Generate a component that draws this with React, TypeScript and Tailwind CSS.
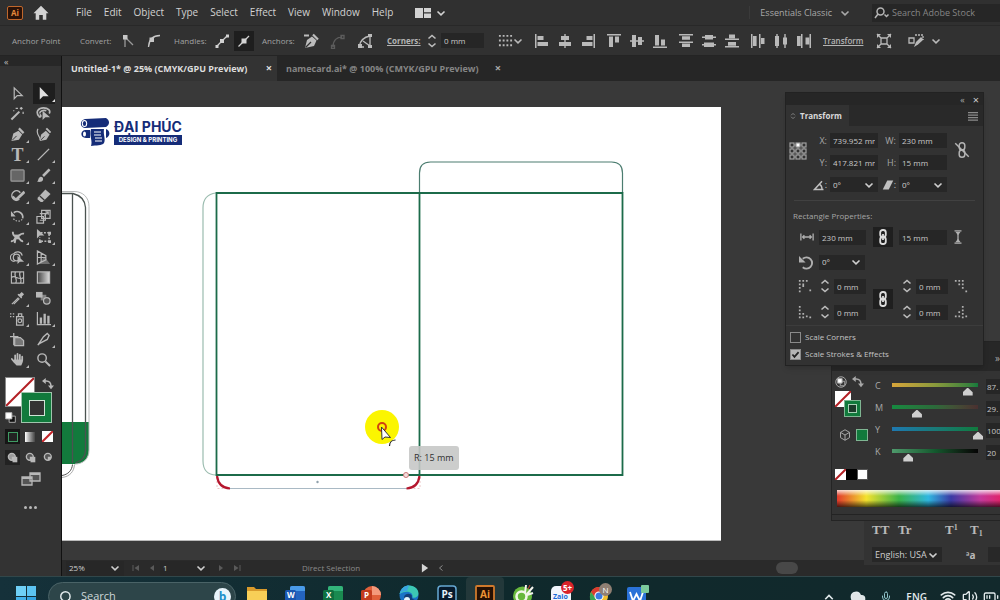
import React, { ReactNode, useState } from "react";
import { Cloud, Mic, Volume2, Wifi, BatteryMedium, Search } from "lucide-react";

const UI = "font-['Open_Sans','Noto_Sans',sans-serif]";

/* ---------- shared pieces ---------- */

function Icon({ children, className = "size-4", box = 16 }: { children: ReactNode; className?: string; box?: number }) {
  return (
    <svg viewBox={`0 0 ${box} ${box}`} className={`block shrink-0 ${className}`} fill="none" stroke="currentColor" strokeWidth="1.3" aria-hidden="true">
      {children}
    </svg>
  );
}

function Chevron({ className = "" }: { className?: string }) {
  return (
    <svg viewBox="0 0 10 10" className={`size-[10px] shrink-0 ${className}`} fill="none" stroke="currentColor" strokeWidth="1.6" aria-hidden="true">
      <path d="M1.5 3.5 5 6.8 8.5 3.5" />
    </svg>
  );
}

function IconButton({ label, className = "", children }: { label: string; className?: string; children: ReactNode }) {
  return (
    <button type="button" aria-label={label} className={`flex h-5 w-5 shrink-0 items-center justify-center ${className}`}>
      {children}
    </button>
  );
}

function Field({ label, value, className = "" }: { label: string; value: string; className?: string }) {
  const [v, setV] = useState(value);
  return (
    <input
      type="text"
      aria-label={label}
      value={v}
      onChange={(e) => setV(e.target.value)}
      className={`h-[15px] min-w-0 shrink-0 bg-[#262626] px-[3px] text-[8px] leading-3 font-medium text-[#c8c8c8] outline-none ${className}`}
    />
  );
}

function Drop({ label, options, className = "" }: { label: string; options: string[]; className?: string }) {
  return (
    <span className={`relative flex h-[15px] shrink-0 items-center bg-[#272727] text-[#cfcfcf] ${className}`}>
      <select aria-label={label} className="h-full w-full appearance-none bg-transparent pl-[3px] text-[8px] leading-3 font-medium outline-none">
        {options.map((o) => (
          <option key={o}>{o}</option>
        ))}
      </select>
      <Chevron className="pointer-events-none absolute right-[4px]" />
    </span>
  );
}

function Stepper({ label }: { label: string }) {
  return (
    <button type="button" aria-label={label} className="flex h-4 w-[18px] shrink-0 items-center justify-center text-[#bdbdbd]">
      <Icon className="size-4">
        <path d="M4.5 5.5 8 2.5l3.500 3M4.500 10.500 8 13.500l3.500-3" strokeWidth="1.600" />
      </Icon>
    </button>
  );
}

/* ---------- menu bar ---------- */

const MENUS = ["File", "Edit", "Object", "Type", "Select", "Effect", "View", "Window", "Help"];

function MenuBar() {
  return (
    <header className="flex h-[26px] shrink-0 items-center border-b border-[#282828] bg-[#303030] text-[#d2d2d2]">
      <span className="ml-[7px] flex h-[14px] w-4 items-center justify-center rounded-[2px] border border-[#c0672c] bg-[#2a1208] text-[8px] font-bold text-[#e58a3c]">
        Ai
      </span>
      <button type="button" aria-label="Home" className="ml-[10px]">
        <Icon className="size-4">
          <path d="M8 .8 15.500 8.300H13.300V14.800H9.800V10H6.200V14.800H2.700V8.300H.5Z" fill="currentColor" stroke="none" />
        </Icon>
      </button>
      <nav className="ml-[27px] flex gap-3 text-[10px] font-medium">
        {MENUS.map((m) => (
          <button type="button" key={m}>
            {m}
          </button>
        ))}
      </nav>
      <button type="button" aria-label="Arrange documents" className="ml-[22px] flex items-center gap-[5px]">
        <svg viewBox="0 0 16 12" className="h-3 w-4" fill="currentColor" aria-hidden="true">
          <path d="M0 1h8v10H0zM9 1h7v4.300H9zM9 6.500h7V11H9z" />
        </svg>
        <Chevron />
      </button>
      <button type="button" className="ml-auto flex items-center gap-2 border-l border-[#3a3a3a] pl-[10px] text-[9px] font-medium text-[#a9a9a9]">
        Essentials Classic
        <Chevron />
      </button>
      <label className="ml-[22px] flex h-[18px] w-[128px] items-center gap-[2px] bg-[#262626] pl-[2px] text-[#b5b5b5]">
        <svg viewBox="0 0 16 12" className="h-3 w-4 shrink-0" fill="none" stroke="currentColor" strokeWidth="1.500" aria-hidden="true">
          <circle cx="6.500" cy="4.500" r="3.500" />
          <path d="M4 7 1 11M10.500 7.500l2 2 2-2" />
        </svg>
        <input type="search" aria-label="Search Adobe Stock" placeholder="Search Adobe Stock" className="w-full bg-transparent text-[9px] outline-none placeholder:text-[#858585]" />
      </label>
    </header>
  );
}

/* ---------- control bar ---------- */

const f = { fill: "currentColor", stroke: "none" };

const ALIGN: { label: string; art: ReactNode }[][] = [
  [
    { label: "Align left", art: <path {...f} d="M1 1h1.500v14H1zM3.500 3h6v4h-6zM3.500 9h10.500v4H3.500z" /> },
    { label: "Align centre", art: <path {...f} d="M7.300 1h1.400v14H7.300zM4 3h8v4H4zM2 9h12v4H2z" /> },
    { label: "Align right", art: <path {...f} d="M13.500 1H15v14h-1.500zM6.500 3h6v4h-6zM2 9h10.500v4H2z" /> },
  ],
  [
    { label: "Align top", art: <path {...f} d="M1 1h14v1.500H1zM3 3.500h4V14H3zM9 3.500h4v6H9z" /> },
    { label: "Align middle", art: <path {...f} d="M1 7.300h14v1.400H1zM3 2h4v12H3zM9 4h4v8H9z" /> },
    { label: "Align bottom", art: <path {...f} d="M1 13.500h14V15H1zM3 2h4v10.500H3zM9 6.500h4v6H9z" /> },
  ],
  [
    { label: "Distribute top", art: <path {...f} d="M1 1h14v1.500H1zM4 3.300h8v3.400H4zM1 8.500h14V10H1zM4 10.500h8V14H4z" /> },
    { label: "Distribute vertically", art: <path {...f} d="M1 3.500h14V5H1zM4 2h8v4.500H4zM1 11h14v1.500H1zM3 9.500h10V14H3z" /> },
    { label: "Distribute bottom", art: <path {...f} d="M1 5.500h14V7H1zM5 1.500h6v3.700H5zM1 13h14v1.500H1zM4 9h8v3.700H4z" /> },
  ],
  [
    { label: "Distribute left", art: <path {...f} d="M1 1h1.500v14H1zM3 3h3.600v10H3zM9 1h1.500v14H9zM11 5h3.500v6H11z" /> },
    { label: "Distribute horizontally", art: <path {...f} d="M3.300 1h1.400v14H3.300zM2 3h4v10H2zM11.300 1h1.400v14h-1.400zM10 4.500h4v7h-4z" /> },
    { label: "Distribute right", art: <path {...f} d="M1 3h3.700v10H1zM5 1h1.500v14H5zM9.500 4.500h3.700v7H9.500zM13.500 1H15v14h-1.500z" /> },
  ],
];

function ControlBar() {
  return (
    <div className="flex h-[30px] shrink-0 items-center overflow-hidden border-b border-[#242424] bg-[#313131] pl-3 text-[8px] text-[#a2a2a2]">
      <span className="w-[68px] shrink-0">Anchor Point</span>
      <span className="w-[38px] shrink-0">Convert:</span>
      <div className="flex shrink-0 gap-[6px] text-[#c6c6c6]">
        <IconButton label="Convert to corner">
          <Icon>
            <path d="M5 14V4l8 8" opacity=".7" />
            <path d="M3 2h4.500v4.500H3z" {...f} />
          </Icon>
        </IconButton>
        <IconButton label="Convert to smooth">
          <Icon>
            <path d="M2.500 14C3 7 7 2.500 14 2.500" />
            <path d="M3.500 4.500H8V9H3.500z" {...f} />
          </Icon>
        </IconButton>
      </div>
      <span className="ml-[10px] w-[38px] shrink-0">Handles:</span>
      <div className="flex shrink-0 gap-[2px] text-[#d2d2d2]">
        <IconButton label="Show handles">
          <Icon>
            <path d="M3 13 13 3" />
            <path d="M6 6h4v4H6zM1.500 12h3v3h-3zM12 1.500h3v3h-3z" {...f} />
          </Icon>
        </IconButton>
        <IconButton label="Hide handles" className="bg-[#1e1e1e]">
          <Icon>
            <path d="M2.500 13.500 13 3" />
            <path d="M5.500 5.500h5v5h-5z" {...f} />
          </Icon>
        </IconButton>
      </div>
      <span className="ml-2 w-[39px] shrink-0">Anchors:</span>
      <div className="flex shrink-0 gap-[7px] text-[#bcbcbc]">
        <IconButton label="Remove anchor">
          <Icon>
            <path d="M2 15 4 7l5-3.500 4.500 4L11 13Z" {...f} />
            <path d="M2.500 14.500 8 9" stroke="#313131" />
            <path d="m10 1.500 5 5M1 2.500h5" strokeWidth="2.200" />
          </Icon>
        </IconButton>
        <IconButton label="Connect endpoints" className="text-[#5c5c5c]">
          <Icon>
            <path d="M3 14C3 7 7 4 12 4M1.500 12.500h3v3h-3zM11 2.500h3v3h-3z" />
          </Icon>
        </IconButton>
        <IconButton label="Cut path">
          <Icon>
            <path d="M2 14C3 8 7 4 13 3M13 3v10M6 8l7 5M2 14h5" />
            <path d="M11 1h4v3h-4zM11 12h4v3h-4zM1 11h4v4H1z" {...f} />
          </Icon>
        </IconButton>
      </div>
      <button type="button" className="ml-3 w-9 shrink-0 text-left font-bold text-[#b4b4b4] underline">
        Corners:
      </button>
      <Stepper label="Corner radius step" />
      <Field label="Corner radius" value="0 mm" className="w-[43px]" />
      <button type="button" aria-label="Reference grid" className="ml-[14px] flex w-6 shrink-0 items-center text-[#b9b9b9]">
        <Icon className="size-[15px]">
          <path d="M1 3h14M1 8h14M1 13h14" strokeWidth="2" strokeDasharray="2 2" />
        </Icon>
        <Chevron />
      </button>
      <div className="ml-[10px] flex shrink-0 gap-[6px] text-[#b9b9b9]">
        {ALIGN.map((group, i) => (
          <div key={i} className="flex gap-[3px]">
            {group.map((a) => (
              <IconButton key={a.label} label={a.label}>
                <Icon>{a.art}</Icon>
              </IconButton>
            ))}
          </div>
        ))}
      </div>
      <button type="button" className="ml-[9px] w-10 shrink-0 text-left font-semibold text-[#b4b4b4] underline">
        Transform
      </button>
      <IconButton label="Isolate" className="ml-[11px] text-[#b9b9b9]">
        <Icon>
          <path d="M5 5h6v6H5zM1 1l4 4M15 1l-4 4M1 15l4-4M15 15l-4-4" />
          <path d="M1 1h4L1 5zM15 1h-4l4 4zM1 15h4l-4-4zM15 15h-4l4-4z" {...f} />
        </Icon>
      </IconButton>
      <button type="button" aria-label="Select similar" className="ml-[14px] flex shrink-0 items-center gap-[7px] text-[#b9b9b9]">
        <Icon>
          <path d="M1 5h5v5H1z" />
          <path d="M7 2h8v5" strokeDasharray="2 1" />
          <path d="m6 14 2-5 5-5 2.500 2.500-5.500 5z" {...f} />
        </Icon>
        <Chevron />
      </button>
    </div>
  );
}

/* ---------- toolbox ---------- */

const TOOLS: { label: string; art: ReactNode; more?: boolean }[] = [
  { label: "Selection", art: <path d="M4.500 2v11.500l3.200-3.200H13Z" /> },
  { label: "Direct selection", more: true, art: <path {...f} d="M4 1v13.500l3.500-3.700H13.500Z" /> },
  {
    label: "Magic wand",
    art: (
      <>
        <path d="M1.500 14.500 10 6" strokeWidth="2.200" />
        <path d="M12 1v3M10.500 2.500h3M14 6v2.500M6 2.500h2.500M4 4.500v1" />
      </>
    ),
  },
  {
    label: "Lasso",
    art: (
      <>
        <path d="M3 11C-1 6 3 2 8 2s8 3 6 6M4 8c0-3 4-4 7-3M3 11c2 2 3-1 1-2" strokeWidth="1.800" />
        <path {...f} d="M7 5v10l3-3h5z" />
      </>
    ),
  },
  {
    label: "Pen",
    more: true,
    art: (
      <>
        <path {...f} d="M1.500 15 3.500 7 9 4l4 4-3.500 5.500Z" />
        <path d="M2.500 14 7 9.500" stroke="#333" strokeWidth="1" />
        <path d="m9.500 1.500 5 5" strokeWidth="2.400" />
      </>
    ),
  },
  {
    label: "Curvature",
    art: (
      <>
        <path {...f} d="M4 15 5.500 8l5-4 4 4-3.500 5.500Z" />
        <path d="m5 14 4-4" stroke="#333" strokeWidth="1" />
        <path d="m11 1.500 4.500 4.500" strokeWidth="2" />
        <path d="M4 14C6 11-1 8 2 2" />
      </>
    ),
  },
  { label: "Type", more: true, art: null },
  { label: "Line segment", more: true, art: <path d="M2 14 14 2" strokeWidth="1.500" /> },
  { label: "Rectangle", more: true, art: <rect x="1" y="2" width="14" height="12" rx="1" fill="#666" stroke="#999" /> },
  {
    label: "Paintbrush",
    more: true,
    art: (
      <>
        <path d="m7.500 8.500 7-7" strokeWidth="2.800" />
        <path {...f} d="M1 14.500c2-1 1-4 3.500-5 2-.5 3.500 1 3 3C7 14.500 4 15.500 1 14.500Z" />
      </>
    ),
  },
  {
    label: "Shaper",
    more: true,
    art: (
      <>
        <path d="M11 5a5 5 0 1 0-1 7" strokeWidth="1.600" />
        <path d="M6 13 15.500 4" strokeWidth="3" />
        <path d="m3 9 4 4" strokeWidth="2" />
      </>
    ),
  },
  {
    label: "Eraser",
    more: true,
    art: (
      <>
        <path {...f} d="M2 10 10 1.500 15.500 6.500 7 15H5L1.500 12Z" />
        <path d="m4 8.500 5 4.500" stroke="#333" />
      </>
    ),
  },
  {
    label: "Rotate",
    more: true,
    art: (
      <>
        <path d="M4 4a6 6 0 0 1 9.500 6" strokeWidth="1.800" />
        <path d="M13 11a6 6 0 0 1-10-2" strokeDasharray="1.500 1.500" />
        <path {...f} d="M1 2v6h5z" />
      </>
    ),
  },
  { label: "Scale", more: true, art: <path d="M6 1.500h9V10H6zM1 8h7v7H1zM4 5h6v7H4M9 7l4-4M10 3h3v3" /> },
  {
    label: "Width",
    more: true,
    art: (
      <>
        <path d="M3 3c0 3 1 5 4 5 4 0 3-4 8-3" strokeWidth="2" />
        <path d="M1 13c4 1 4-4 6-5M7 9c4-1 3 5 7 4M6 10l-1 5" strokeWidth="2" />
        <path {...f} d="M5 6h5v5H5z" />
      </>
    ),
  },
  {
    label: "Free transform",
    more: true,
    art: (
      <>
        <path d="M5 4h9v9H4V9" strokeDasharray="2 1.500" strokeWidth="1.600" />
        <path {...f} d="M1 0v10l3-3h5zM13 3h3v3h-3zM13 12h3v3h-3zM3 12h3v3H3z" />
      </>
    ),
  },
  {
    label: "Shape builder",
    more: true,
    art: (
      <>
        <path d="M5 12a4 4 0 0 1-1-8c2-3 8-3 9 2" />
        <circle cx="7" cy="8" r="3.500" />
        <path {...f} d="M8 6v9l2.500-2.500H15z" />
      </>
    ),
  },
  {
    label: "Perspective grid",
    more: true,
    art: (
      <>
        <path d="M1.500 1v14l9-4.500V6ZM1.500 8h9M5.500 3.500V13" />
        <path {...f} opacity=".45" d="m9 7 6 8H3z" />
      </>
    ),
  },
  { label: "Mesh", art: <path d="M1.500 2h13v12h-13zM1.500 8c4-4 7 4 13 0M6 2c-3 4 3 8 0 12M11 2c-3 4 3 8 0 12" strokeWidth="1.200" /> },
  {
    label: "Gradient",
    art: (
      <>
        <defs>
          <linearGradient id="toolGrad">
            <stop stopColor="#444" />
            <stop offset="1" stopColor="#ddd" />
          </linearGradient>
        </defs>
        <rect x="1.500" y="2" width="13" height="12" fill="url(#toolGrad)" />
      </>
    ),
  },
  {
    label: "Eyedropper",
    more: true,
    art: (
      <>
        <path d="M2 14 9 7M4 14l6-6" strokeWidth="1.200" />
        <path {...f} d="m8 4 4 4 1-1-.5-1L15 3.500 12.500 1 10 3.500 9 3z" />
      </>
    ),
  },
  {
    label: "Blend",
    art: (
      <>
        <path {...f} d="M0 1h7v6H0z" />
        <path {...f} opacity=".6" d="M5 4h6v6H5z" />
        <circle cx="11.500" cy="10.500" r="3.500" fill="#555" />
      </>
    ),
  },
  {
    label: "Symbol sprayer",
    more: true,
    art: (
      <>
        <path d="M7 6h7v9H7zM9 6V3h3.500v3" />
        <circle cx="10.500" cy="10.500" r="2" />
        <path d="M0 3h6M0 6h5" strokeDasharray="1.500 1.500" />
      </>
    ),
  },
  {
    label: "Column graph",
    more: true,
    art: (
      <>
        <path d="M1.500 1v13.500H16" />
        <path {...f} d="M4 7h2.500v6.500H4zM8 3h2.500v10.500H8zM12 5h2.500v8.500H12z" />
      </>
    ),
  },
  {
    label: "Artboard",
    art: (
      <>
        <path d="M4 1v13M0 5h9" />
        <path d="M5 6h6l3.500 3v5.500H5z" fill="#777" />
      </>
    ),
  },
  { label: "Slice", more: true, art: <path d="m2 14 6-9 4-3.500 2 2-2 4.500-8 4Z" strokeWidth="1.500" /> },
  {
    label: "Hand",
    more: true,
    art: (
      <>
        <path d="M5.500 9V3.500M8 8V2M10.500 8V3M13 9V5M5 11 2 7.500" strokeWidth="1.900" strokeLinecap="round" />
        <path {...f} d="M4.500 8h9.400c0 3-.8 4-1.900 6.500H7C5.500 12.500 4.500 11.500 4 10Z" />
      </>
    ),
  },
  {
    label: "Zoom",
    art: (
      <>
        <circle cx="6.500" cy="6.500" r="4.500" strokeWidth="1.500" />
        <path d="m10 10 5 5" strokeWidth="2.200" />
      </>
    ),
  },
];

function Toolbox() {
  return (
    <aside className="flex w-[62px] shrink-0 flex-col border-r border-[#111] bg-[#333] text-[#b8b8b8]">
      <button type="button" aria-label="Collapse tools" className="flex h-[10px] items-center bg-[#272727] pl-1 text-[9px] leading-none">
        «
      </button>
      <div className="mt-[17px] grid h-[287px] w-[52px] grid-cols-2 grid-rows-14 self-center">
        {TOOLS.map((t, i) => (
          <button
            type="button"
            key={t.label}
            aria-label={t.label}
            className={i === 1 ? "relative mx-[2px] flex items-center justify-center bg-[#1e1e1e] text-[#e0e0e0]" : "relative mx-[2px] flex items-center justify-center"}
          >
            {t.art ? <Icon className="size-[15px]">{t.art}</Icon> : <span className="font-['Liberation_Serif',serif] text-[18px] leading-4 font-bold">T</span>}
            {t.more && (
              <svg viewBox="0 0 3 3" className="absolute right-0 bottom-[2px] size-[3px]" fill="currentColor" aria-hidden="true">
                <path d="M3 0v3H0z" />
              </svg>
            )}
          </button>
        ))}
      </div>
      <div className="relative mt-[6px] h-[50px]">
        <button type="button" aria-label="Fill: none" className="absolute top-[1px] left-[5px] size-[30px] border border-[#888] bg-white">
          <svg viewBox="0 0 28 28" className="size-7" aria-hidden="true">
            <path d="M0 28 28 0" stroke="#b32025" strokeWidth="2" />
          </svg>
        </button>
        <button type="button" aria-label="Stroke: green" className="absolute top-4 left-[21px] flex size-[31px] items-center justify-center border border-[#a0c5ad] bg-[#117a3c]">
          <span className="size-4 border border-[#cfe3d5] bg-[#333]" />
        </button>
        <button type="button" aria-label="Swap fill and stroke" className="absolute top-[2px] left-[42px]">
          <Icon className="size-3">
            <path d="M4 4c6-1 8 3 8 7" strokeWidth="2" />
            <path {...f} d="M5 0v8L0 4zM8 10h8l-4 5z" />
          </Icon>
        </button>
        <button type="button" aria-label="Default colours" className="absolute top-[36px] left-[5px]">
          <Icon className="size-[11px]">
            <path d="M6 6h9v9H6z" fill="#111" />
            <path d="M1 1h9v9H1z" fill="#fff" />
          </Icon>
        </button>
      </div>
      <div className="mt-[3px] flex gap-[2px] pl-[5px]">
        <IconButton label="Colour" className="!h-[15px] !w-[15px] bg-[#161616]">
          <span className="size-[10px] border border-[#3f9b63] bg-[#222]" />
        </IconButton>
        <IconButton label="Gradient fill" className="!h-[15px] !w-[15px]">
          <span className="size-[10px] bg-linear-to-r from-white to-[#444]" />
        </IconButton>
        <IconButton label="No fill" className="!h-[15px] !w-[17px]">
          <Icon className="size-[11px]">
            <path d="M0 0h16v16H0z" fill="#fff" stroke="none" />
            <path d="M0 16 16 0" stroke="#c4262b" strokeWidth="3" />
          </Icon>
        </IconButton>
      </div>
      <div className="mt-[6px] flex gap-[2px] pl-[5px]">
        {["Draw normal", "Draw behind", "Draw inside"].map((l, i) => (
          <IconButton key={l} label={l} className={i === 0 ? "!h-[15px] !w-[15px] bg-[#222]" : "!h-[15px] !w-[16px]"}>
            <Icon className="size-[11px]">
              {i < 2 ? <path {...f} d="M8 7h7v8H8z" /> : null}
              <circle cx="7" cy="7" r="5" fill={i === 0 ? "#999" : "#555"} strokeWidth="2" />
              <path {...f} d="M7 7h5a5 5 0 0 1-5 5z" />
            </Icon>
          </IconButton>
        ))}
      </div>
      <button type="button" aria-label="Screen mode" className="mt-[7px] flex h-[18px] justify-center">
        <svg viewBox="0 0 20 15" className="h-[15px] w-5" fill="#555" stroke="currentColor" strokeWidth="1.300" aria-hidden="true">
          <path d="M9 1h10v8H9zM1 5h10v8H1z" />
          <path d="M9 2h10M1 6h10" strokeWidth="2" />
        </svg>
      </button>
      <button type="button" aria-label="Edit toolbar" className="mt-3 flex justify-center gap-[2px] py-[4px]">
        <i className="size-[3px] rounded-full bg-current" />
        <i className="size-[3px] rounded-full bg-current" />
        <i className="size-[3px] rounded-full bg-current" />
      </button>
    </aside>
  );
}

/* ---------- document ---------- */

function Tabs() {
  return (
    <div role="tablist" className="flex h-[25px] shrink-0 items-stretch bg-[#262626] text-[9px]">
      <div className="flex w-[215px] items-center justify-between bg-[#333] pr-[5px] pl-[9px] font-bold text-[#dedede]">
        <button type="button" role="tab" aria-selected="true" className="whitespace-nowrap">
          Untitled-1* @ 25% (CMYK/GPU Preview)
        </button>
        <button type="button" aria-label="Close Untitled-1" className="text-[11px]">
          ×
        </button>
      </div>
      <div className="flex w-[230px] items-center justify-between pr-[6px] pl-[9px] font-bold text-[#858585]">
        <button type="button" role="tab" aria-selected="false" className="whitespace-nowrap">
          namecard.ai* @ 100% (CMYK/GPU Preview)
        </button>
        <button type="button" aria-label="Close namecard.ai" className="text-[11px] text-[#aaa]">
          ×
        </button>
      </div>
    </div>
  );
}

function Drawing() {
  return (
    <svg className="absolute inset-0 h-full w-full" fill="none" aria-label="Folder die-line" role="img">
      <g transform="translate(-62 -107)">
        <path d="M62 422h27v28c0 9-6 14-14 14H62z" fill="#127a3c" />
        <path d="M62 191.500h12c9 0 15 6 15 15V450c0 9-6 14-14 14" stroke="#b9bbbb" />
        <path d="M62 193.500h11c8 2 12 7 12.500 14V450c0 7-4 11-10 13" stroke="#4b5350" strokeWidth="1.300" />
        <path d="M72.500 193v270" stroke="#4b5350" strokeWidth="1.300" />
        <path d="M62 475.500c6-1 10-5 10.500-11" stroke="#555" />
        <path d="M62 477.500c8-1 12-6 12.500-13" stroke="#aaa" />

        <path d="M216 193c-9 1-13 6-13 15v253c0 9 5 14 13 14" stroke="#9bbcaf" strokeWidth="1.200" />
        <path d="M419.500 193v-20c0-7 4-11 11-11h181c7 0 11 4 11 11v20" stroke="#4c7d70" strokeWidth="1.200" />
        <path d="M216.500 193h406v282h-406zM419.500 193v282" stroke="#1c6b4a" strokeWidth="1.800" />

        <path d="M228 488.500h180" stroke="#a9b9c4" />
        <path d="M217 477v11.500h12M420 477v11.500h-12" stroke="#e6b7b7" strokeWidth=".8" strokeDasharray="2 2" />
        <path d="M217 476c1 8 5 12 13 12.500M419.500 476c-1 8-5 12-13 12.500" stroke="#b5172e" strokeWidth="2.200" />
        <circle cx="317.500" cy="482" r="1.200" fill="#8fa0ab" />
        <circle cx="406" cy="475" r="2.500" stroke="#c97777" fill="#f3dede" />

        <circle cx="382" cy="427" r="17" fill="#fbf500" />
        <circle cx="382" cy="427" r="4" stroke="#d1420f" strokeWidth="2" />
        <path d="m381.500 427 .5 12.500 3-2.500 5.500.5Z" fill="#fff" stroke="#333" />
        <path d="M389.500 446c0-4 3-6 6-6" stroke="#222" strokeWidth="1.200" />
      </g>
    </svg>
  );
}

function Logo() {
  return (
    <div className="absolute top-[10px] left-[18px] flex items-center gap-1 font-['Inter','Noto_Sans',sans-serif] text-[#152c78]">
      <svg viewBox="0 0 30 30" className="size-[30px]" fill="currentColor" aria-hidden="true">
        <path d="M5 2 26 1c4 2 4 7 0 9L5 11C-1 10 0 3 5 2Z" />
        <ellipse cx="4.500" cy="6.500" rx="2.700" ry="3.600" fill="#fff" />
        <ellipse cx="4.500" cy="6.500" rx="1.600" ry="2.600" />
        <path d="M5 13h5v8H6c-6 0-6-7-1-8ZM26 12c4 1 5 7 0 9z" />
        <ellipse cx="4.500" cy="17" rx="1.500" ry="2.500" fill="#fff" />
        <path d="M11 12h13c-1 6 2 10 0 14-2 3-8 2-13 3 2-5-2-10 0-17Z" />
        <path d="M14 15h7M14 18h7M15 21h7M15 24h7" stroke="#fff" strokeWidth="1.200" />
      </svg>
      <div>
        <p className="text-[14px] leading-[15px] font-bold whitespace-nowrap">ĐẠI PHÚC</p>
        <p className="mt-[1px] bg-[#152c78] px-[2px] text-center text-[6px] leading-[10px] font-bold whitespace-nowrap text-white">DESIGN &amp; PRINTING</p>
      </div>
    </div>
  );
}

function StatusBar() {
  return (
    <footer className="flex h-4 shrink-0 items-center overflow-hidden bg-[#2a2a2a] pl-1 text-[#8b8b8b]">
      <Drop label="Zoom level" options={["25%", "50%", "100%"]} className="w-[58px]" />
      <div className="flex w-[36px] justify-center gap-2 pl-1 text-[#5a5a5a]">
        <Icon className="size-2">
          <path {...f} d="M1 2h2v12H1zM14 2v12L5 8z" />
        </Icon>
        <Icon className="size-2">
          <path {...f} d="M12 2v12L4 8z" />
        </Icon>
      </div>
      <Drop label="Artboard" options={["1"]} className="w-[50px]" />
      <div className="flex w-[38px] justify-center gap-2 text-[#5a5a5a]">
        <Icon className="size-2">
          <path {...f} d="M4 2v12l8-6z" />
        </Icon>
        <Icon className="size-2">
          <path {...f} d="M2 2v12l9-6zM13 2h2v12h-2z" />
        </Icon>
      </div>
      <span className="ml-[54px] w-[118px] text-[8px]">Direct Selection</span>
      <Icon className="size-[10px] text-[#d5d5d5]">
        <path {...f} d="M3 1v14l10-7z" />
      </Icon>
      <Icon className="ml-[7px] size-2">
        <path d="m11 3-6 5 6 5" strokeWidth="2" />
      </Icon>
      <span className="ml-auto h-3 w-[22px] rounded-full bg-[#484848]" />
      <span className="w-[202px] shrink-0" />
    </footer>
  );
}

/* ---------- panels ---------- */

const linkArt = (
  <>
    <rect x="5.200" y="1" width="5.600" height="7" rx="2.500" strokeWidth="1.800" />
    <rect x="5.200" y="8" width="5.600" height="7" rx="2.500" strokeWidth="1.800" />
    <path d="M8 5v6" strokeWidth="1.800" />
  </>
);

const topCorner = (
  <path {...f} d="M1 1h2v2H1zM5 1h2v2H5zM9 1h2v2H9zM1 5h2v2H1zM1 9h2v2H1zM1 13h2v2H1zM5 5h2v4H5zM13 12h2v2h-2z" />
);
const bottomCorner = (
  <path {...f} d="M1 1h2v2H1zM1 5h2v2H1zM1 9h2v2H1zM1 13h2v2H1zM5 9h2v2H5zM5 13h2v2H5zM9 12h2v2H9zM13 13h2v2h-2z" />
);

function TransformPanel() {
  return (
    <section aria-label="Transform" className="absolute top-[36px] right-4 z-20 w-[199px] border border-[#222] bg-[#323232] text-[9px] text-[#a6a6a6] shadow-md">
      <div className="flex h-3 items-center justify-end gap-2 bg-[#262626] pr-1 leading-none">
        <button type="button" aria-label="Collapse">«</button>
        <button type="button" aria-label="Close" className="text-[11px] text-[#ccc]">×</button>
      </div>
      <div className="flex h-[21px] items-center justify-between bg-[#292929] pr-[5px]">
        <h2 className="flex h-full w-[63px] items-center gap-1 bg-[#323232] pl-1 text-[8px] font-bold text-[#dadada]">
          <Icon className="size-[6px] text-[#888]">
            <path d="m3 6 5-5 5 5M3 10l5 5 5-5" strokeWidth="2.500" />
          </Icon>
          Transform
        </h2>
        <button type="button" aria-label="Panel menu">
          <Icon className="size-[10px] text-[#8b8b8b]">
            <path d="M0 2.500h16M0 6.500h16M0 10.500h16M0 14.500h16" strokeWidth="2" />
          </Icon>
        </button>
      </div>

      <div className="flex items-start pt-[7px]">
        <button type="button" aria-label="Reference point" className="mt-[9px] ml-[3px] text-[#a0a0a0]">
          <Icon className="size-[18px]" box={18}>
            <path d="M3 3h12v12H3zM3 9h12M9 3v12" strokeWidth="1" />
            {[3, 9, 15].map((y) => [3, 9, 15].map((x) => <rect key={`${x}-${y}`} x={x - 2} y={y - 2} width="4" height="4" strokeWidth="1.200" fill={x === 9 && y === 3 ? "#fff" : "#323232"} />))}
          </Icon>
        </button>
        <div className="flex flex-col gap-[7px]">
          <div className="flex items-center">
            <span className="w-5 text-right">X:</span>
            <Field label="X" value="739.952 mm" className="ml-[3px] w-[48px]" />
            <span className="w-[18px] text-right">W:</span>
            <Field label="Width" value="230 mm" className="ml-[3px] w-[48px]" />
          </div>
          <div className="flex items-center">
            <span className="w-5 text-right">Y:</span>
            <Field label="Y" value="417.821 mm" className="ml-[3px] w-[48px]" />
            <span className="w-[18px] text-right">H:</span>
            <Field label="Height" value="15 mm" className="ml-[3px] w-[48px]" />
          </div>
          <div className="flex items-center">
            <span className="flex w-5 items-center justify-end text-[#c0c0c0]">
              <Icon className="size-3">
                <path d="M14 14H2L12 3M8 7c3 1 4 4 4 7" strokeWidth="2" />
              </Icon>
              :
            </span>
            <Drop label="Rotate" options={["0°", "90°"]} className="ml-[3px] w-[48px]" />
            <span className="flex w-[18px] items-center justify-end text-[#c0c0c0]">
              <Icon className="size-3">
                <path {...f} d="M7 2h8L9 14H1z" />
              </Icon>
              :
            </span>
            <Drop label="Shear" options={["0°", "30°"]} className="ml-[3px] w-[48px]" />
          </div>
        </div>
        <button type="button" aria-label="Constrain proportions" className="mt-[8px] ml-[6px] text-[#b5b5b5]">
          <Icon className="size-[18px]">
            <rect x="5.500" y="1.500" width="5" height="6.500" rx="2.500" />
            <rect x="5.500" y="8" width="5" height="6.500" rx="2.500" />
            <path d="m2 2 12 12" />
          </Icon>
        </button>
      </div>

      <hr className="mx-2 mt-[8px] border-[#414141]" />
      <h3 className="mt-[9px] ml-[7px] text-[8px] leading-3">Rectangle Properties:</h3>

      <div className="mt-[5px] flex h-5 items-center pl-[14px]">
        <Icon className="size-[14px] text-[#b0b0b0]">
          <path d="M1 4v8M15 4v8M3 8h10M5 6 3 8l2 2M11 6l2 2-2 2" strokeWidth="1.500" />
        </Icon>
        <Field label="Rectangle width" value="230 mm" className="ml-[5px] w-[47px]" />
        <IconButton label="Link sizes" className="ml-[7px] bg-[#1f1f1f] text-[#ddd]">
          <Icon>{linkArt}</Icon>
        </IconButton>
        <Field label="Rectangle height" value="15 mm" className="ml-[6px] w-[48px]" />
        <Icon className="ml-1 size-[14px] text-[#b0b0b0]">
          <path d="M4 1h8M4 15h8M8 3v10" strokeWidth="1.500" />
          <path {...f} d="M5 2h6L8 6zM5 14h6l-3-4z" />
        </Icon>
      </div>
      <div className="mt-[5px] flex h-5 items-center pl-[13px]">
        <Icon className="size-[15px] text-[#b0b0b0]">
          <path d="M4 4a6 6 0 1 1 0 9" strokeWidth="2" />
          <path {...f} d="M0 1v7h7z" />
        </Icon>
        <Drop label="Rectangle angle" options={["0°", "90°"]} className="ml-[5px] w-[46px]" />
      </div>

      <div className="mt-[6px] flex items-center pl-[12px] text-[#b0b0b0]">
        <div className="flex flex-col gap-[10px]">
          <div className="flex h-4 items-center">
            <Icon className="size-[14px]">{topCorner}</Icon>
            <span className="ml-[4px] flex items-center">
              <Stepper label="Top left radius step" />
              <Field label="Top left radius" value="0 mm" className="w-[32px]" />
            </span>
          </div>
          <div className="flex h-4 items-center">
            <Icon className="size-[14px]">{bottomCorner}</Icon>
            <span className="ml-[4px] flex items-center">
              <Stepper label="Bottom left radius step" />
              <Field label="Bottom left radius" value="0 mm" className="w-[32px]" />
            </span>
          </div>
        </div>
        <IconButton label="Link corner radii" className="ml-[7px] bg-[#1f1f1f] text-[#ddd]">
          <Icon>{linkArt}</Icon>
        </IconButton>
        <div className="ml-[5px] flex flex-col gap-[10px]">
          <div className="flex h-4 items-center">
            <Stepper label="Top right radius step" />
            <Field label="Top right radius" value="0 mm" className="w-[32px]" />
            <Icon className="ml-[6px] size-[14px]">
              <path {...f} d="M1 1h2v2H1zM5 1h2v2H5zM9 1h2v2H9zM5 5h2v2H5zM9 5h2v2H9zM9 9h2v2H9zM13 13h2v2h-2z" />
            </Icon>
          </div>
          <div className="flex h-4 items-center">
            <Stepper label="Bottom right radius step" />
            <Field label="Bottom right radius" value="0 mm" className="w-[32px]" />
            <Icon className="ml-[6px] size-[14px]">
              <path {...f} d="M9 1h2v2H9zM9 5h2v2H9zM5 7h2v2H5zM9 9h2v2H9zM1 12h2v2H1zM5 12h2v2H5zM9 13h2v2H9zM13 12h2v2h-2z" />
            </Icon>
          </div>
        </div>
      </div>

      <hr className="mt-[5px] border-[#3c3c3c]" />
      <div className="flex flex-col gap-[5px] py-[5px] pl-1 text-[8px] leading-3 font-medium text-[#c4c4c4]">
        <label className="flex items-center gap-1">
          <input type="checkbox" className="size-[11px] appearance-none border border-[#8a8a8a]" />
          Scale Corners
        </label>
        <label className="flex items-center gap-1">
          <span className="relative size-[11px]">
            <input type="checkbox" defaultChecked className="peer absolute inset-0 size-[11px] appearance-none border border-[#8a8a8a] checked:bg-[#b5b5b5]" />
            <Icon className="pointer-events-none absolute inset-0 size-[11px] text-[#222]">
              <path d="m3.500 8 3 3.500 6-7" strokeWidth="2.500" />
            </Icon>
          </span>
          Scale Strokes &amp; Effects
        </label>
      </div>
    </section>
  );
}

const INKS = [
  { name: "C", value: 88, shown: "87.", track: "bg-linear-to-r from-[#d7a43a] via-[#8a9a3c] to-[#117a3c]" },
  { name: "M", value: 29, shown: "29.", track: "bg-linear-to-r from-[#148a40] via-[#2b6a3a] to-[#4a3030]" },
  { name: "Y", value: 100, shown: "100", track: "bg-linear-to-r from-[#1f78b0] via-[#1a7a78] to-[#117a3c]" },
  { name: "K", value: 19, shown: "20", track: "bg-linear-to-r from-[#4e9a6c] via-[#13592e] to-[#050505]" },
];

function ColorPanel() {
  return (
    <section aria-label="Color" className="absolute top-[285px] right-0 z-10 h-[180px] w-[169px] overflow-hidden border border-r-0 border-[#242424] bg-[#333] text-[#a8a8a8]">
      <div className="flex h-[29px] items-center justify-end bg-[#272727] pt-1 text-[10px]">
        <button type="button" aria-label="Expand">»</button>
      </div>
      <div className="flex">
        <div className="relative h-[90px] w-[40px] shrink-0">
          <button type="button" aria-label="Default colours" className="absolute top-[5px] left-[3px]">
            <Icon className="size-3">
              <circle cx="8" cy="8" r="7" />
              <path d="M7 7h6v6H7z" fill="#333" />
              <path d="M3.500 3.500h6v6h-6z" fill="#fff" />
            </Icon>
          </button>
          <button type="button" aria-label="Swap" className="absolute top-[5px] left-[20px]">
            <Icon className="size-3">
              <path d="M4 4c6-1 8 3 8 7" strokeWidth="2" />
              <path {...f} d="M5 0v8L0 4zM8 10h8l-4 5z" />
            </Icon>
          </button>
          <button type="button" aria-label="Fill" className="absolute top-[20px] left-[3px] size-4 bg-white">
            <svg viewBox="0 0 16 16" className="size-4" aria-hidden="true">
              <path d="M0 16 16 0" stroke="#b32025" strokeWidth="2" />
            </svg>
          </button>
          <button type="button" aria-label="Stroke" className="absolute top-[29px] left-[12px] flex size-[17px] items-center justify-center border border-[#7fb592] bg-[#117a3c]">
            <span className="size-[9px] border border-[#a8cfb5] bg-[#1c3a2a]" />
          </button>
          <button type="button" aria-label="Web-safe warning" className="absolute top-[58px] left-[7px]">
            <Icon className="size-3">
              <path d="m8 1 6 3.500v7L8 15l-6-3.500v-7ZM2 4.500 8 8l6-3.500M8 8v7" />
            </Icon>
          </button>
          <button type="button" aria-label="Nearest colour" className="absolute top-[58px] left-[24px] size-3 border border-[#7fb592] bg-[#117a3c]" />
        </div>
        <div className="flex flex-1 flex-col gap-[6px] pt-[7px]">
          {INKS.map((ink) => (
            <div key={ink.name} className="flex h-4 items-center text-[9px]">
              <label htmlFor={`ink-${ink.name}`} className="w-[15px] pl-[3px]">
                {ink.name}
              </label>
              <input
                id={`ink-${ink.name}`}
                type="range"
                defaultValue={ink.value}
                className={`h-4 w-[96px] shrink-0 appearance-none bg-[length:86px_4px] bg-[position:5px_5px] bg-no-repeat [&::-webkit-slider-thumb]:mt-[11px] [&::-webkit-slider-thumb]:h-[8px] [&::-webkit-slider-thumb]:w-[10px] [&::-webkit-slider-thumb]:appearance-none [&::-webkit-slider-thumb]:bg-[#cfcfcf] [&::-webkit-slider-thumb]:[clip-path:polygon(50%_0,100%_60%,100%_100%,0_100%,0_60%)] ${ink.track}`}
              />
              <Field label={`${ink.name} value`} value={ink.shown} className="ml-[3px] w-[20px] !px-[1px]" />
            </div>
          ))}
        </div>
      </div>
      <div className="mt-[8px] ml-[3px] flex">
        <button type="button" aria-label="None" className="size-[11px] bg-white">
          <svg viewBox="0 0 11 11" className="size-[11px]" aria-hidden="true">
            <path d="M0 11 11 0" stroke="#b32025" strokeWidth="2" />
          </svg>
        </button>
        <button type="button" aria-label="Black" className="size-[11px] bg-black" />
        <button type="button" aria-label="White" className="size-[11px] border border-[#555] bg-white" />
      </div>
      <div className="mt-[10px] ml-[5px] h-[17px] bg-[linear-gradient(180deg,#ffffffcc_0%,#ffffff00_35%,#00000000_60%,#000000aa_100%),linear-gradient(90deg,#e23a2c_0%,#f3e22e_18%,#3bb34a_38%,#2fb7e0_56%,#3a3aa5_70%,#c43a9c_88%,#e0246b_100%)]" />
      <hr className="mt-[7px] border-[#232323]" />
    </section>
  );
}

function CharacterPanel() {
  return (
    <section aria-label="Character" className="absolute top-[465px] right-0 h-[44px] w-[136px] bg-[#333] text-[#bababa]">
      <div className="flex h-[17px] items-center pl-2 font-['Liberation_Serif',serif] text-[13px] leading-none font-bold">
        <button type="button" className="w-[26px] text-left">TT</button>
        <button type="button" className="w-[47px] text-left">Tr</button>
        <button type="button" className="w-[25px] text-left">T<sup className="text-[8px]">1</sup></button>
        <button type="button">T<sub className="text-[8px]">1</sub></button>
      </div>
      <div className="flex items-center pt-[9px] pl-2 text-[9px]">
        <Drop label="Language" options={["English: USA"]} className="w-[70px] [&>select]:text-[9px]" />
        <span className="ml-[24px] w-[22px] leading-none font-bold">
          ª<span className="text-[10px]">a</span>
        </span>
        <span className="h-[15px] flex-1 bg-[#282828]" />
      </div>
    </section>
  );
}

/* ---------- taskbar ---------- */

function Badge({ className, children }: { className: string; children: ReactNode }) {
  return <span className={`absolute flex items-center justify-center rounded-full leading-none ${className}`}>{children}</span>;
}

const office = (dark: string, mid: string, light: string) => (
  <>
    <rect x="5" y="1" width="15" height="18" rx="2" fill={mid} />
    <path d="M5 3a2 2 0 0 1 2-2h11a2 2 0 0 1 2 2v3H5z" fill={light} />
    <rect x="0" y="5" width="11" height="11" rx="1.500" fill={dark} />
  </>
);

const APPS: { label: string; art: ReactNode; extra?: ReactNode }[] = [
  {
    label: "File Explorer",
    art: (
      <>
        <path d="M0 2h7l2 2h11v14H0z" fill="#d99a2b" />
        <path d="M0 6h20v13H0z" fill="#f8cf57" />
      </>
    ),
  },
  { label: "Word", art: office("#1a56b0", "#2464c0", "#4a9be8"), extra: <span className="absolute top-[6px] left-[2px] text-[8px] leading-none font-bold text-white">W</span> },
  { label: "Excel", art: office("#107040", "#1a8a50", "#33b47a"), extra: <span className="absolute top-[6px] left-[3px] text-[8px] leading-none font-bold text-white">X</span> },
  {
    label: "PowerPoint",
    art: (
      <>
        <circle cx="11" cy="10" r="9" fill="#e0603a" />
        <path d="M11 1a9 9 0 0 1 9 9h-9z" fill="#f49a7c" />
        <rect x="0" y="5" width="11" height="11" rx="1.500" fill="#c23c1e" />
      </>
    ),
    extra: <span className="absolute top-[6px] left-[3px] text-[8px] leading-none font-bold text-white">P</span>,
  },
  {
    label: "Edge",
    art: (
      <>
        <circle cx="10" cy="10" r="9.500" fill="#1a74c8" />
        <path d="M.5 9C2 3 6 .5 10 .5c6 0 9.500 4 9.500 8 0 3-3 5-6 4 1-5-5-8-13-3.500Z" fill="#3cc8b4" />
        <path d="M.5 9C2 3 6 .5 10 .5L8 6C5 6 2 7 .5 9Z" fill="#3aa5e0" />
        <path d="M5 12c1-4 7-4 8-1-1 2 1 4 4 4-4 4-12 3-12-3Z" fill="#123f78" />
        <circle cx="8" cy="15" r="3" fill="#e4f3fb" />
      </>
    ),
  },
  {
    label: "Photoshop",
    art: <rect x="1" y="1" width="18" height="18" rx="3" fill="#06192c" stroke="#67a9d4" strokeWidth="1.500" />,
    extra: <span className="absolute inset-x-0 top-[4px] text-center text-[10px] leading-none font-bold text-[#e5f2fb]">Ps</span>,
  },
  {
    label: "Illustrator",
    art: <rect x="1" y="1" width="18" height="18" rx="1" fill="#261003" stroke="#d0792c" strokeWidth="1.800" />,
    extra: <span className="absolute inset-x-0 top-[4px] text-center text-[10px] leading-none font-bold text-[#ee9435]">Ai</span>,
  },
  {
    label: "Coc Coc",
    art: (
      <>
        <circle cx="9.500" cy="11" r="9.500" fill="#67b83c" />
        <circle cx="8.500" cy="11.500" r="5" fill="none" stroke="#f1f7e8" strokeWidth="2.500" />
        <path d="m12 8 1-8M14 9l6-7M14 10l6-2" stroke="#f4f4ee" strokeWidth="2" />
        <path d="m15 4 2-4" stroke="#d6432d" />
      </>
    ),
  },
  {
    label: "Zalo",
    art: <rect x="0" y="1" width="20" height="19" rx="5" fill="#f1f6fc" />,
    extra: (
      <>
        <span className="absolute top-[8px] left-[2px] text-[7px] leading-none font-bold text-[#1769d8]">Zalo</span>
        <Badge className="-top-[4px] left-[10px] size-[13px] bg-[#d8232a] text-[8px] font-bold text-white">5+</Badge>
      </>
    ),
  },
  {
    label: "Chrome",
    art: (
      <>
        <circle cx="10" cy="11" r="9" fill="#f0be2e" />
        <path d="M2 7a9 9 0 0 1 16 0H10L6 13Z" fill="#d93b30" />
        <path d="m2 7 5 7 2 6C2 20-1 13 2 7Z" fill="#38a452" />
        <circle cx="10" cy="11" r="4.600" fill="#fff" />
        <circle cx="10" cy="11" r="3.500" fill="#3a7be0" />
      </>
    ),
    extra: <Badge className="-top-[2px] left-[10px] size-[13px] bg-[#8f7f73] text-[8px] text-white">N</Badge>,
  },
  {
    label: "WPS",
    art: (
      <>
        <rect x="0" y="2" width="19" height="18" rx="2" fill="#2a72d8" />
        <path d="m3 7 3 9 3.500-7L13 16l3-9" stroke="#fff" strokeWidth="1.800" fill="none" />
        <rect x="14" y="0" width="8" height="8" rx="1" fill="#7ccb9c" />
      </>
    ),
  },
];

function Taskbar() {
  return (
    <footer className="flex h-[24px] shrink-0 items-start overflow-hidden border-t border-[#31474a] bg-linear-to-r from-[#15313a] via-[#0f292c] to-[#12292c] text-[#e2eaec]">
      <button type="button" aria-label="Start" className="mt-[9px] ml-4 grid size-5 shrink-0 grid-cols-2 gap-[1px]">
        <i className="bg-[#6fd0f6]" />
        <i className="bg-[#5cc4f2]" />
        <i className="bg-[#43b2ea]" />
        <i className="bg-[#34a4e2]" />
      </button>
      <label className="mt-[5px] ml-3 flex h-[29px] w-[188px] shrink-0 items-center gap-2 rounded-full border border-[#4a6367] bg-[#2d4549] pr-1 pl-[10px]">
        <Search className="size-[14px] shrink-0" strokeWidth={2.5} />
        <input type="search" aria-label="Search" placeholder="Search" className="w-full min-w-0 bg-transparent text-[11px] outline-none placeholder:text-[#ccd6d8]" />
        <span className="flex size-[17px] shrink-0 items-center justify-center rounded-full bg-[#e8f4fb] text-[12px] leading-none font-bold text-[#1b8fc9]">b</span>
      </label>
      <nav className="ml-[2px] flex shrink-0">
        {APPS.map((a) => (
          <button
            type="button"
            key={a.label}
            aria-label={a.label}
            className={a.label === "Illustrator" ? "flex h-10 w-[38px] justify-center rounded bg-[#23383a] pt-2" : "flex h-10 w-[38px] justify-center pt-2"}
          >
            <span className="relative block size-5">
              <svg viewBox="0 0 20 20" className="size-5 overflow-visible" aria-hidden="true">
                {a.art}
              </svg>
              {a.extra}
            </span>
          </button>
        ))}
      </nav>
      <div className="mt-3 mr-[1px] ml-auto flex items-center text-[10px] leading-3">
        <Icon className="mr-[15px] size-3">
          <path d="m3 11 5-5 5 5" strokeWidth="2.200" />
        </Icon>
        <Cloud className="mr-[14px] size-4" fill="#dfe4e6" />
        <Mic className="mr-[14px] size-3 text-[#8fc3c9]" />
        <span className="mr-[13px] font-semibold">ENG</span>
        <Wifi className="mr-[6px] size-4" strokeWidth={2.500} />
        <Volume2 className="mr-[5px] size-4" />
        <BatteryMedium className="size-4" />
      </div>
    </footer>
  );
}

export default function App() {
  return (
    <div className={`flex h-screen flex-col overflow-hidden bg-[#333] leading-normal ${UI}`}>
      <MenuBar />
      <ControlBar />
      <div className="flex min-h-0 flex-1">
        <Toolbox />
        <main className="relative flex min-w-0 flex-1 flex-col">
          <Tabs />
          <div className="flex min-h-0 flex-1 bg-[#393939] pt-[26px] pr-[279px] pb-[19px]">
            <div className="relative flex-1 overflow-hidden border-b border-[#bbb] bg-white">
              <Drawing />
              <Logo />
              <div className="absolute top-[339px] left-[347px] rounded-[3px] bg-[#c6c8c6]/90 px-[5px] py-[5px] text-[9px] leading-[14px] font-medium whitespace-nowrap text-[#303030]">R: 15 mm</div>
            </div>
          </div>
          <TransformPanel />
          <ColorPanel />
          <CharacterPanel />
          <StatusBar />
        </main>
      </div>
      <Taskbar />
    </div>
  );
}
